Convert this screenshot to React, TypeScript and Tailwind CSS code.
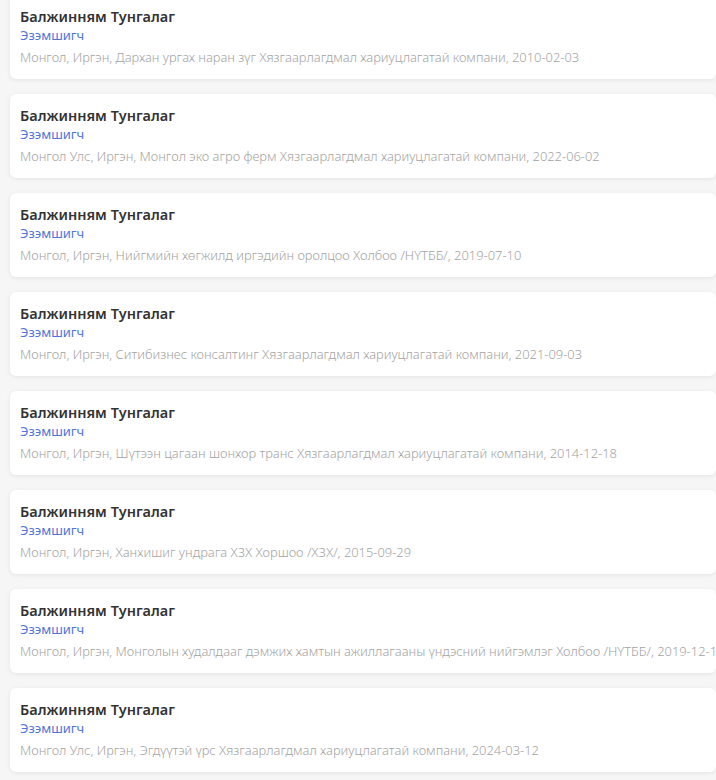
const rows = [
  "Монгол, Иргэн, Дархан ургах наран зүг Хязгаарлагдмал хариуцлагатай компани, 2010-02-03",
  "Монгол Улс, Иргэн, Монгол эко агро ферм Хязгаарлагдмал хариуцлагатай компани, 2022-06-02",
  "Монгол, Иргэн, Нийгмийн хөгжилд иргэдийн оролцоо Холбоо /НҮТББ/, 2019-07-10",
  "Монгол, Иргэн, Ситибизнес консалтинг Хязгаарлагдмал хариуцлагатай компани, 2021-09-03",
  "Монгол, Иргэн, Шүтээн цагаан шонхор транс Хязгаарлагдмал хариуцлагатай компани, 2014-12-18",
  "Монгол, Иргэн, Ханхишиг ундрага ХЗХ Хоршоо /ХЗХ/, 2015-09-29",
  "Монгол, Иргэн, Монголын худалдааг дэмжих хамтын ажиллагааны үндэсний нийгэмлэг Холбоо /НҮТББ/, 2019-12-19",
  "Монгол Улс, Иргэн, Эгдүүтэй үрс Хязгаарлагдмал хариуцлагатай компани, 2024-03-12",
]

function OwnerCard({ info }: { info: string }) {
  return (
    <div className="bg-white rounded-md shadow-[0_1px_4px_rgba(0,0,0,0.08)] pl-[10px] pt-[11px] pb-[12px] h-[84px] overflow-hidden">
      <div className="text-[14.5px] leading-[20px] font-semibold text-[#333333]">Балжинням Тунгалаг</div>
      <div className="text-[13px] leading-[18px] text-[#5074dc]">Эзэмшигч</div>
      <div className="mt-[3px] text-[12.9px] leading-[20px] font-light text-[#a3a3a3] whitespace-nowrap">{info}</div>
    </div>
  )
}

export default function App() {
  return (
    <div className="min-h-screen w-[716px] bg-[#f6f6f6] overflow-hidden font-['Noto_Sans',sans-serif]">
      <div className="-mt-[5px] pl-[10px] flex flex-col gap-[15px]">
        {rows.map((r, i) => (
          <OwnerCard key={i} info={r} />
        ))}
      </div>
    </div>
  )
}
